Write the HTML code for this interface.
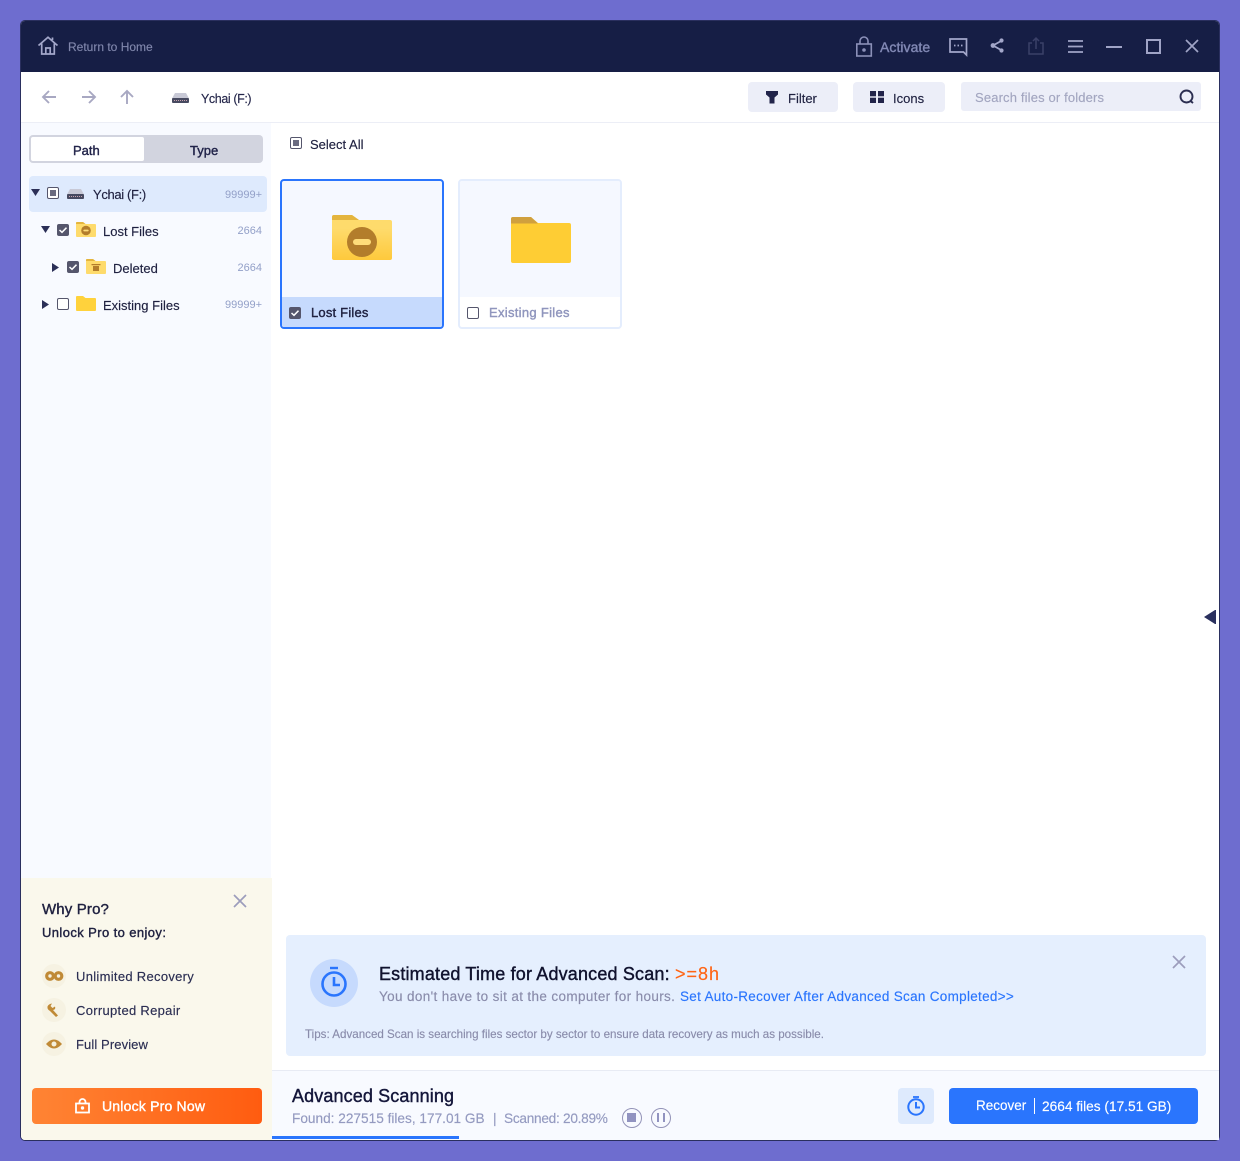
<!DOCTYPE html>
<html><head><meta charset="utf-8">
<style>
html,body{margin:0;padding:0;width:1240px;height:1161px;overflow:hidden;background:#6e6dcf}
body{position:relative;font-family:"Liberation Sans","Noto Sans CJK SC",sans-serif;color:#1f2140}
.a{position:absolute}
.t{position:absolute;white-space:nowrap;line-height:20px;font-size:13px;-webkit-text-stroke:.15px currentColor}
.m{-webkit-text-stroke:.4px currentColor}
svg{position:absolute;overflow:visible}
.cb{position:absolute;width:10px;height:10px;border:1px solid #55566c;border-radius:2px;background:#fff}
.cb.on{background:#55566c;width:12px;height:12px;border:0}
.cb.part::after{content:"";position:absolute;left:2px;top:2px;width:6px;height:6px;background:#6a6b80}
.cnt{position:absolute;white-space:nowrap;font-size:11px;line-height:20px;color:#93a0c8;right:978px}
</style></head><body>
<div class="a" style="left:20px;top:20px;width:1198px;height:1119px;border:1px solid #2a2f5e;border-radius:5px;background:#fff;overflow:hidden">
</div>

<!-- header -->
<div class="a" style="left:21px;top:21px;width:1198px;height:51px;background:#161e45;border-radius:4px 4px 0 0"></div>
<svg style="left:38px;top:36px" width="20" height="19" viewBox="0 0 20 19" fill="none" stroke="#a3a7ca" stroke-width="1.700"><path d="M.5 9.500 10 1.200l9.500 8.300M3.700 7.500V18h12.600V7.500M7.800 18v-6h4.400v6M14.500 4V1.500"/></svg>
<div class="t" style="left:68px;top:37px;font-size:12px;color:#8087ac">Return to Home</div>
<svg style="left:855px;top:36px" width="18" height="21" viewBox="0 0 18 21" fill="none" stroke="#8b90b8" stroke-width="1.600"><rect x="1.800" y="8" width="14.500" height="12"/><path d="M5 8V5a4 4 0 0 1 8 0v3"/><circle cx="9" cy="14" r="1" fill="#8b90b8"/></svg>
<div class="t m" style="left:880px;top:37px;font-size:14px;color:#8188b4;letter-spacing:.05px">Activate</div>
<svg style="left:949px;top:38px" width="19" height="18" viewBox="0 0 19 18" fill="none" stroke="#a3a7ca" stroke-width="1.700"><path d="M1 1h16.500v16l-3-3H1z"/><path d="M5 7.500h1.500M8.500 7.500H10M12 7.500h1.500"/></svg>
<svg style="left:990px;top:38px" width="14" height="15" viewBox="0 0 14 15" fill="#a3a7ca" stroke="#a3a7ca" stroke-width="1.800"><path d="M12 2.500 3 7.500l9 5" fill="none"/><circle cx="3" cy="7.500" r="1.500"/><circle cx="11.500" cy="2.500" r="1.200"/><circle cx="11.500" cy="12.500" r="1.200"/></svg>
<svg style="left:1028px;top:37px" width="16" height="18" viewBox="0 0 16 18" fill="none" stroke="#3a4068" stroke-width="1.500"><path d="M4 6H1v11h14V6h-3M8 12V1M5 4l3-3 3 3"/></svg>
<svg style="left:1068px;top:40px" width="15" height="13" viewBox="0 0 15 13" stroke="#a0a4c6" stroke-width="1.700"><path d="M0 1h15M0 6.500h15M0 12h15"/></svg>
<div class="a" style="left:1106px;top:45.500px;width:16px;height:2px;background:#a0a4c6"></div>
<div class="a" style="left:1146px;top:39px;width:11px;height:11px;border:2px solid #a0a4c6"></div>
<svg style="left:1186px;top:40px" width="12" height="12" viewBox="0 0 12 12" stroke="#a0a4c6" stroke-width="1.700"><path d="M0 0l12 12M12 0 0 12"/></svg>

<!-- toolbar -->
<div class="a" style="left:21px;top:122px;width:1198px;height:1px;background:#eceef6"></div>
<svg style="left:42px;top:90px" width="100" height="15" viewBox="0 0 100 15" fill="none" stroke="#a8a8c2" stroke-width="1.900"><path d="M14 7H1M7 1 1 7l6 6M40 7h13M47 1l6 6-6 6M85 14V1M79 7l6-6 6 6"/></svg>
<svg style="left:172px;top:93px" width="17" height="10" viewBox="0 0 17 10"><path d="M3 0h11l3 5.500H0z" fill="#c8c9d6"/><rect y="5" width="17" height="5" rx="1" fill="#474a60"/><path d="M2 7.500h13" stroke="#c9a5b0" stroke-width="1" stroke-dasharray="1 1"/></svg>
<div class="t" style="left:201px;top:89px;font-size:12.500px;color:#24264a;letter-spacing:-.4px">Ychai (F:)</div>
<div class="a" style="left:748px;top:82px;width:90px;height:30px;background:#eceef8;border-radius:4px"></div>
<svg style="left:766px;top:91px" width="12" height="13" viewBox="0 0 12 13" fill="#22244a"><path d="M0 0h12v3.500L8.500 6.500V12.500h-5V6.500L0 3.500z"/></svg>
<div class="t" style="left:788px;top:89px;font-size:13px">Filter</div>
<div class="a" style="left:853px;top:82px;width:92px;height:30px;background:#eceef8;border-radius:4px"></div>
<svg style="left:870px;top:91px" width="14" height="12" viewBox="0 0 14 12" fill="#22244a"><rect width="6" height="5.300"/><rect x="8" width="6" height="5.300"/><rect y="6.700" width="6" height="5.300"/><rect x="8" y="6.700" width="6" height="5.300"/></svg>
<div class="t" style="left:893px;top:89px;font-size:13px">Icons</div>
<div class="a" style="left:961px;top:82px;width:240px;height:29px;background:#eceef8;border-radius:3px"></div>
<div class="t" style="left:975px;top:88px;font-size:13px;color:#a3a6c0;letter-spacing:.15px">Search files or folders</div>
<svg style="left:1179px;top:89px" width="16" height="16" viewBox="0 0 16 16" fill="none" stroke="#2a2d50" stroke-width="1.900"><circle cx="7.500" cy="7.500" r="6"/><path d="M11.500 12l2.500 2"/></svg>

<!-- sidebar -->
<div class="a" style="left:21px;top:123px;width:250px;height:755px;background:#f8faff"></div>
<div class="a" style="left:29px;top:135px;width:234px;height:28px;background:#d2d4df;border-radius:4px"></div>
<div class="a" style="left:31px;top:137px;width:113px;height:24px;background:#fff;border-radius:2px"></div>
<div class="t m" style="left:73px;top:141px;font-size:13px;color:#22244a">Path</div>
<div class="t m" style="left:190px;top:141px;font-size:13px;color:#22244a">Type</div>
<div class="a" style="left:29px;top:176px;width:238px;height:36px;background:#deeafd;border-radius:4px"></div>
<svg style="left:31px;top:189px" width="10" height="8" viewBox="0 0 10 8" fill="#2b2f57"><path d="M0 0h9L4.500 7z"/></svg>
<div class="cb part" style="left:47px;top:187px;background:#fff"></div>
<svg style="left:67px;top:189px" width="17" height="10" viewBox="0 0 17 10"><path d="M3 0h11l3 5.500H0z" fill="#c8c9d6"/><rect y="5" width="17" height="5" rx="1" fill="#474a60"/><path d="M2 7.500h13" stroke="#c9a5b0" stroke-width="1" stroke-dasharray="1 1"/></svg>
<div class="t" style="left:93px;top:185px;font-size:13px;letter-spacing:-.35px">Ychai (F:)</div>
<div class="cnt" style="top:185px">99999+</div>

<svg style="left:41px;top:226px" width="10" height="8" viewBox="0 0 10 8" fill="#2b2f57"><path d="M0 0h9L4.500 7z"/></svg>
<div class="cb on" style="left:57px;top:224px"><svg style="left:2px;top:3px" width="8" height="6" viewBox="0 0 8 6" fill="none" stroke="#fff" stroke-width="1.500"><path d="M.5 3 3 5.300 7.500.7"/></svg></div>
<svg style="left:76px;top:222px" width="20" height="15" viewBox="0 0 20 15"><path d="M0 1q0-1 1-1h6l2.500 2H19q1 0 1 1v11q0 1-1 1H1q-1 0-1-1z" fill="#fedb6c"/><path d="M0 1q0-1 1-1h6l2.500 2H0z" fill="#e4b53e"/><circle cx="10" cy="8.500" r="4.800" fill="#b37d2b"/><rect x="7.300" y="7.600" width="5.400" height="1.800" rx=".9" fill="#fedc7a"/></svg>
<div class="t" style="left:103px;top:222px;font-size:13px">Lost Files</div>
<div class="cnt" style="top:221px">2664</div>

<svg style="left:52px;top:263px" width="7" height="9" viewBox="0 0 7 9" fill="#2b2f57"><path d="M0 0v9l7-4.500z"/></svg>
<div class="cb on" style="left:67px;top:261px"><svg style="left:2px;top:3px" width="8" height="6" viewBox="0 0 8 6" fill="none" stroke="#fff" stroke-width="1.500"><path d="M.5 3 3 5.300 7.500.7"/></svg></div>
<svg style="left:86px;top:259px" width="20" height="15" viewBox="0 0 20 15"><path d="M0 1q0-1 1-1h6l2.500 2H19q1 0 1 1v11q0 1-1 1H1q-1 0-1-1z" fill="#fedb6c"/><path d="M0 1q0-1 1-1h6l2.500 2H0z" fill="#e4b53e"/><path d="M5.500 5h9v1.300h-9zM7 7h6v5H7z" fill="#b37d2b"/></svg>
<div class="t" style="left:113px;top:259px;font-size:13px">Deleted</div>
<div class="cnt" style="top:258px">2664</div>

<svg style="left:42px;top:300px" width="7" height="9" viewBox="0 0 7 9" fill="#2b2f57"><path d="M0 0v9l7-4.500z"/></svg>
<div class="cb" style="left:57px;top:298px"></div>
<svg style="left:76px;top:296px" width="20" height="15" viewBox="0 0 20 15"><path d="M0 1q0-1 1-1h6l2.500 2H19q1 0 1 1v11q0 1-1 1H1q-1 0-1-1z" fill="#ffd23c"/></svg>
<div class="t" style="left:103px;top:296px;font-size:13px">Existing Files</div>
<div class="cnt" style="top:295px">99999+</div>

<!-- main top -->
<div class="cb part" style="left:290px;top:137px"></div>
<div class="t" style="left:310px;top:135px;font-size:13px">Select All</div>

<!-- card 1 -->
<div class="a" style="left:280px;top:179px;width:160px;height:146px;border:2px solid #2a75fd;border-radius:4px;background:#f5f8ff;overflow:hidden">
<div class="a" style="left:0;top:116px;width:160px;height:30px;background:#c6dafd"></div>
</div>
<svg style="left:332px;top:215px" width="60" height="45" viewBox="0 0 60 45"><defs><linearGradient id="g1" x1="0" y1="0" x2="0" y2="1"><stop offset=".3" stop-color="#fedb6c"/><stop offset="1" stop-color="#fec93c"/></linearGradient></defs><path d="M0 2q0-2 2-2h18l7 5h31q2 0 2 2v36q0 2-2 2H2q-2 0-2-2z" fill="url(#g1)"/><path d="M0 2q0-2 2-2h18l7 5H0z" fill="#e4b53e"/><circle cx="30" cy="27" r="15" fill="#b37d2b"/><rect x="21" y="24" width="18" height="6" rx="3" fill="#fedc7a"/></svg>
<div class="cb on" style="left:289px;top:307px"><svg style="left:2px;top:3px" width="8" height="6" viewBox="0 0 8 6" fill="none" stroke="#fff" stroke-width="1.500"><path d="M.5 3 3 5.300 7.500.7"/></svg></div>
<div class="t m" style="left:311px;top:303px;font-size:13px;letter-spacing:.2px">Lost Files</div>

<!-- card 2 -->
<div class="a" style="left:458px;top:179px;width:160px;height:146px;border:2px solid #e4edfd;border-radius:4px;background:#fff;overflow:hidden">
<div class="a" style="left:0;top:0;width:160px;height:116px;background:#f5f8ff"></div>
</div>
<svg style="left:511px;top:217px" width="60" height="46" viewBox="0 0 60 46"><path d="M0 2q0-2 2-2h18l7 6h31q2 0 2 2v36q0 2-2 2H2q-2 0-2-2z" fill="#fecd34"/><path d="M0 2q0-2 2-2h18l7 6.500H0z" fill="#d0a03e"/></svg>
<div class="cb" style="left:467px;top:307px"></div>
<div class="t m" style="left:489px;top:303px;font-size:13px;color:#8f95bd;letter-spacing:.3px">Existing Files</div>

<!-- collapse arrow -->
<svg style="left:1204px;top:610px" width="12" height="14" viewBox="0 0 12 14" fill="#2a305e"><path d="M11 0h1v14h-1L0 7z"/></svg>

<!-- pro panel -->
<div class="a" style="left:21px;top:878px;width:251px;height:262px;background:#faf8ec;border-radius:0 0 0 4px"></div>
<svg style="left:234px;top:895px" width="12" height="12" viewBox="0 0 12 12" stroke="#9c9dbc" stroke-width="1.700"><path d="M0 0l12 12M12 0 0 12"/></svg>
<div class="t m" style="left:42px;top:900px;font-size:15px;letter-spacing:.15px">Why Pro?</div>
<div class="t m" style="left:42px;top:923px;font-size:13px;letter-spacing:.4px">Unlock Pro to enjoy:</div>
<div class="a" style="left:42px;top:964px;width:24px;height:24px;border-radius:50%;background:#f6f2e2"></div>
<svg style="left:45px;top:971px" width="19" height="10" viewBox="0 0 19 10" fill="none" stroke="#c08a36" stroke-width="3.200"><circle cx="5" cy="5" r="3.300"/><circle cx="13.500" cy="5" r="3.300"/></svg>
<div class="t" style="left:76px;top:967px;font-size:13px;color:#2b2e52;letter-spacing:.3px">Unlimited Recovery</div>
<div class="a" style="left:42px;top:998px;width:24px;height:24px;border-radius:50%;background:#f6f2e2"></div>
<svg style="left:47px;top:1003px" width="14" height="14" viewBox="0 0 14 14" fill="#c08a36"><path d="M5 .5 3.500 3l2 2L8 3.500q1 3-2 3.500l5 5.500-2 1.500L3 8Q0 6.500.5 3.500 1.500 1 5 .5z"/></svg>
<div class="t" style="left:76px;top:1001px;font-size:13px;color:#2b2e52;letter-spacing:.3px">Corrupted Repair</div>
<div class="a" style="left:42px;top:1032px;width:24px;height:24px;border-radius:50%;background:#f6f2e2"></div>
<svg style="left:46px;top:1038px" width="16" height="12" viewBox="0 0 16 12"><path d="M0 6q8-9 16 0-8 9-16 0z" fill="#c08a36"/><circle cx="8" cy="6" r="2.500" fill="#f5f0dc"/></svg>
<div class="t" style="left:76px;top:1035px;font-size:13px;color:#2b2e52;letter-spacing:.1px">Full Preview</div>
<div class="a" style="left:32px;top:1088px;width:230px;height:36px;border-radius:4px;background:linear-gradient(90deg,#ff8434,#ff5c10)"></div>
<svg style="left:75px;top:1098px" width="15" height="16" viewBox="0 0 15 16" fill="none" stroke="#fff" stroke-width="1.800"><rect x="1" y="5.500" width="13" height="9"/><path d="M4.500 5.500V4a3 3 0 0 1 6 0v1.500"/><circle cx="7.500" cy="10" r=".8" fill="#fff"/></svg>
<div class="t m" style="left:102px;top:1096px;font-size:14px;color:#fff;letter-spacing:.2px">Unlock Pro Now</div>

<!-- scan banner -->
<div class="a" style="left:286px;top:935px;width:920px;height:121px;background:#e5effe;border-radius:4px"></div>
<div class="a" style="left:310px;top:959px;width:48px;height:48px;border-radius:50%;background:#c6dafd"></div>
<svg style="left:320px;top:966px" width="28" height="32" viewBox="0 0 28 32" fill="none" stroke="#2a75fd" stroke-width="2.600"><circle cx="14" cy="18" r="11.500"/><path d="M10 2h8" stroke-width="2.400"/><path d="M14 11v8h6"/></svg>
<div class="t m" style="left:379px;top:963px;font-size:18px;color:#10122e;line-height:22px;letter-spacing:.17px">Estimated Time for Advanced Scan:</div>
<div class="t" style="left:675px;top:963px;font-size:18px;color:#ff6414;line-height:22px;letter-spacing:1px">&gt;=8h</div>
<div class="t" style="left:379px;top:987px;font-size:13.500px;color:#8a8cab;letter-spacing:.36px">You don't have to sit at the computer for hours.</div>
<div class="t" style="left:680px;top:987px;font-size:13.500px;color:#2a75fd;letter-spacing:.3px">Set Auto-Recover After Advanced Scan Completed&gt;&gt;</div>
<div class="t" style="left:305px;top:1025px;font-size:11.600px;color:#8a8cab">Tips: Advanced Scan is searching files sector by sector to ensure data recovery as much as possible.</div>
<svg style="left:1173px;top:956px" width="12" height="12" viewBox="0 0 12 12" stroke="#9c9dbc" stroke-width="1.700"><path d="M0 0l12 12M12 0 0 12"/></svg>

<!-- bottom bar -->
<div class="a" style="left:272px;top:1070px;width:947px;height:70px;background:#f8faff;border-top:1px solid #e8ebf4;box-sizing:border-box"></div>
<div class="a" style="left:272px;top:1136px;width:187px;height:3px;background:#2a75fd"></div>
<div class="t m" style="left:292px;top:1085px;font-size:18px;color:#14163a;line-height:22px;letter-spacing:.12px">Advanced Scanning</div>
<div class="t" style="left:292px;top:1109px;font-size:13.650px;color:#949ac0">Found: 227515 files, 177.01 GB</div>
<div class="t" style="left:493px;top:1109px;font-size:13.650px;color:#949ac0">|</div>
<div class="t" style="left:504px;top:1109px;font-size:13.650px;color:#949ac0;letter-spacing:-.27px">Scanned: 20.89%</div>
<div class="a" style="left:622px;top:1108px;width:18px;height:18px;border:1px solid #9393b8;border-radius:50%"></div>
<div class="a" style="left:627px;top:1113px;width:9px;height:9px;background:#9193c0"></div>
<div class="a" style="left:651px;top:1108px;width:18px;height:18px;border:1px solid #9393b8;border-radius:50%"></div>
<div class="a" style="left:657px;top:1113px;width:2px;height:9px;background:#9193c0"></div>
<div class="a" style="left:663px;top:1113px;width:2px;height:9px;background:#9193c0"></div>
<div class="a" style="left:898px;top:1088px;width:36px;height:36px;background:#deeafd;border-radius:4px"></div>
<svg style="left:907px;top:1095px" width="18" height="21" viewBox="0 0 18 21" fill="none" stroke="#2a75fd" stroke-width="2"><circle cx="9" cy="12" r="7.700"/><path d="M6 2h6" stroke-width="1.800"/><path d="M9 7v5.500h4"/></svg>
<div class="a" style="left:949px;top:1088px;width:249px;height:36px;background:#2a75fd;border-radius:4px"></div>
<div class="t" style="left:976px;top:1096px;font-size:13.500px;color:#fff">Recover</div>
<div class="a" style="left:1034px;top:1098px;width:1px;height:16px;background:#fff"></div>
<div class="t" style="left:1042px;top:1097px;font-size:13.700px;color:#fff">2664 files (17.51 GB)</div>
</body></html>
